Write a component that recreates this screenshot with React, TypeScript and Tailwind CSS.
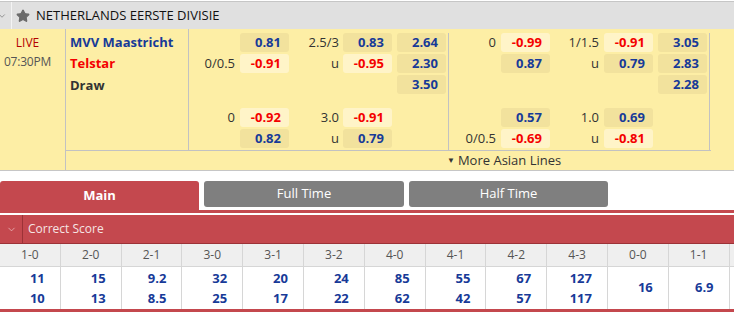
import { ChevronDown, Star } from "lucide-react";

type Cell = { v: string; neg?: boolean } | null;

const font = { fontFamily: '"Open Sans", "Noto Sans", sans-serif' };

function Box({ c }: { c: Cell }) {
  if (!c) return <div className="w-[49px] h-[19px]" />;
  return (
    <div
      className={`w-[49px] h-[19px] rounded-[3px] flex items-center justify-end pr-[8px] text-[13px] font-bold ${
        c.neg ? "bg-[#fff4c8] text-[#f40000]" : "bg-[#f2e29d] text-[#173a98]"
      }`}
    >
      {c.v}
    </div>
  );
}

type Row = { h1: string; a: Cell; h2: string; b: Cell; x: Cell };

function HalfA({ rows }: { rows: Row[] }) {
  return (
    <div className="flex flex-col gap-[2px] w-[260px] border-r border-[#c2c2c2]">
      {rows.map((r, i) => (
        <div key={i} className="flex items-center h-[19px] text-[13px] text-[#333]">
          <div className="w-[46px] text-right">{r.h1}</div>
          <div className="ml-[5px]"><Box c={r.a} /></div>
          <div className="w-[50px] text-right">{r.h2}</div>
          <div className="ml-[4px]"><Box c={r.b} /></div>
          <div className="ml-[5px]"><Box c={r.x} /></div>
        </div>
      ))}
    </div>
  );
}

function HalfB({ rows }: { rows: Row[] }) {
  return (
    <div className="flex flex-col gap-[2px] w-[261px] border-r border-[#c2c2c2]">
      {rows.map((r, i) => (
        <div key={i} className="flex items-center h-[19px] text-[13px] text-[#333]">
          <div className="w-[47px] text-right">{r.h1}</div>
          <div className="ml-[5px]"><Box c={r.a} /></div>
          <div className="w-[49px] text-right">{r.h2}</div>
          <div className="ml-[5px]"><Box c={r.b} /></div>
          <div className="ml-[5px]"><Box c={r.x} /></div>
        </div>
      ))}
    </div>
  );
}

const ftTop: Row[] = [
  { h1: "", a: { v: "0.81" }, h2: "2.5/3", b: { v: "0.83" }, x: { v: "2.64" } },
  { h1: "0/0.5", a: { v: "-0.91", neg: true }, h2: "u", b: { v: "-0.95", neg: true }, x: { v: "2.30" } },
  { h1: "", a: null, h2: "", b: null, x: { v: "3.50" } },
];
const htTop: Row[] = [
  { h1: "0", a: { v: "-0.99", neg: true }, h2: "1/1.5", b: { v: "-0.91", neg: true }, x: { v: "3.05" } },
  { h1: "", a: { v: "0.87" }, h2: "u", b: { v: "0.79" }, x: { v: "2.83" } },
  { h1: "", a: null, h2: "", b: null, x: { v: "2.28" } },
];
const ftBot: Row[] = [
  { h1: "0", a: { v: "-0.92", neg: true }, h2: "3.0", b: { v: "-0.91", neg: true }, x: null },
  { h1: "", a: { v: "0.82" }, h2: "u", b: { v: "0.79" }, x: null },
];
const htBot: Row[] = [
  { h1: "", a: { v: "0.57" }, h2: "1.0", b: { v: "0.69" }, x: null },
  { h1: "0/0.5", a: { v: "-0.69", neg: true }, h2: "u", b: { v: "-0.81", neg: true }, x: null },
];

const scores = ["1-0", "2-0", "2-1", "3-0", "3-1", "3-2", "4-0", "4-1", "4-2", "4-3", "0-0", "1-1"];
const home = ["11", "15", "9.2", "32", "20", "24", "85", "55", "67", "127"];
const away = ["10", "13", "8.5", "25", "17", "22", "62", "42", "57", "117"];
const draws = ["16", "6.9"];

export default function App() {
  return (
    <div className="w-[734px] h-[313px] bg-white overflow-hidden" style={font}>
      {/* league header */}
      <div className="mt-px h-[28px] border-t border-[#c6c6c6] bg-[#e0e0e0] flex items-center">
        <div className="w-[11px] h-full flex items-center text-[#666]">
          <ChevronDown size={10} strokeWidth={1.5} className="-ml-[3px]" />
        </div>
        <div className="w-px h-full bg-[#f4f4f4]" />
        <Star size={14} className="ml-[4px] fill-[#6b6b6b] text-[#6b6b6b]" />
        <span className="ml-[6px] text-[13px] text-[#111]">NETHERLANDS EERSTE DIVISIE</span>
      </div>

      {/* match */}
      <div className="flex h-[142px] bg-[#fdeea5] border-b border-[#c6c6c6]">
        <div className="w-[66px] border-r border-[#c2c2c2] flex flex-col items-center pt-[4px] pr-[10px]">
          <span className="text-[12px] leading-[20px] text-[#b30000]">LIVE</span>
          <span className="text-[12px] leading-[18px] text-[#555] tracking-[-0.2px]">07:30PM</span>
        </div>
        <div className="flex-1 flex flex-col">
          <div className="flex h-[122px] w-[645px] border-b border-[#c2c2c2]">
            <div className="w-[123px] border-r border-[#c2c2c2] pl-[4px] pt-[3px] flex flex-col text-[13px] font-bold">
              <span className="leading-[21px] text-[#173a98]">MVV Maastricht</span>
              <span className="leading-[21px] text-[#f40000]">Telstar</span>
              <span className="leading-[22px] text-[#333]">Draw</span>
            </div>
            <div className="flex flex-col">
              <div className="flex pt-[4px] h-[79px]">
                <HalfA rows={ftTop} />
                <HalfB rows={htTop} />
              </div>
              <div className="flex flex-1">
                <HalfA rows={ftBot} />
                <HalfB rows={htBot} />
              </div>
            </div>
          </div>
          <div className="flex-1 flex items-center pl-[381px] text-[13px] text-[#333]">
            <span className="text-[8px] mr-[3px]">▼</span>More Asian Lines
          </div>
        </div>
      </div>

      {/* tabs */}
      <div className="mt-[10px] flex items-end gap-[5px]">
        <div className="w-[199px] h-[29px] bg-[#c4484e] rounded-t-[3px] flex items-center justify-center text-[13px] font-bold text-white">
          Main
        </div>
        <div className="w-[200px] h-[26px] mb-[3px] bg-[#7f7f7f] rounded-[3px] flex items-center justify-center text-[13px] text-white">
          Full Time
        </div>
        <div className="w-[199px] h-[26px] mb-[3px] bg-[#7f7f7f] rounded-[3px] flex items-center justify-center text-[13px] text-white">
          Half Time
        </div>
      </div>
      <div className="h-[3px] bg-[#c4484e]" />
      <div className="h-[2px]" />

      {/* correct score */}
      <div className="h-[29px] bg-[#c4484e] border-b border-[#9c3237] flex items-stretch">
        <div className="w-[23px] border-r border-[#9c3237] flex items-center justify-center text-[#f0c8ca]">
          <ChevronDown size={11} strokeWidth={1.5} />
        </div>
        <div className="pl-[5px] flex items-center text-[12px] text-[#f6e4e4]">Correct Score</div>
      </div>

      <div className="grid grid-cols-[repeat(12,60.8px)_1fr] border-b-[3px] border-[#c4484e]">
        {scores.map((s) => (
          <div
            key={s}
            className="h-[23px] bg-[#efefef] border-r border-b border-[#d6d6d6] flex items-center justify-center text-[12px] text-[#555]"
          >
            {s}
          </div>
        ))}
        <div className="h-[23px] bg-[#efefef] border-b border-[#d6d6d6]" />
        {home.map((h, i) => (
          <div
            key={i}
            className="h-[42px] border-r border-[#d6d6d6] flex flex-col items-end justify-center pr-[15px] text-[13px] font-bold text-[#173a98] leading-[20px]"
          >
            <span>{h}</span>
            <span>{away[i]}</span>
          </div>
        ))}
        {draws.map((d) => (
          <div
            key={d}
            className="h-[42px] border-r border-[#d6d6d6] flex items-center justify-end pr-[15px] text-[13px] font-bold text-[#173a98]"
          >
            {d}
          </div>
        ))}
        <div className="h-[42px]" />
      </div>
    </div>
  );
}
